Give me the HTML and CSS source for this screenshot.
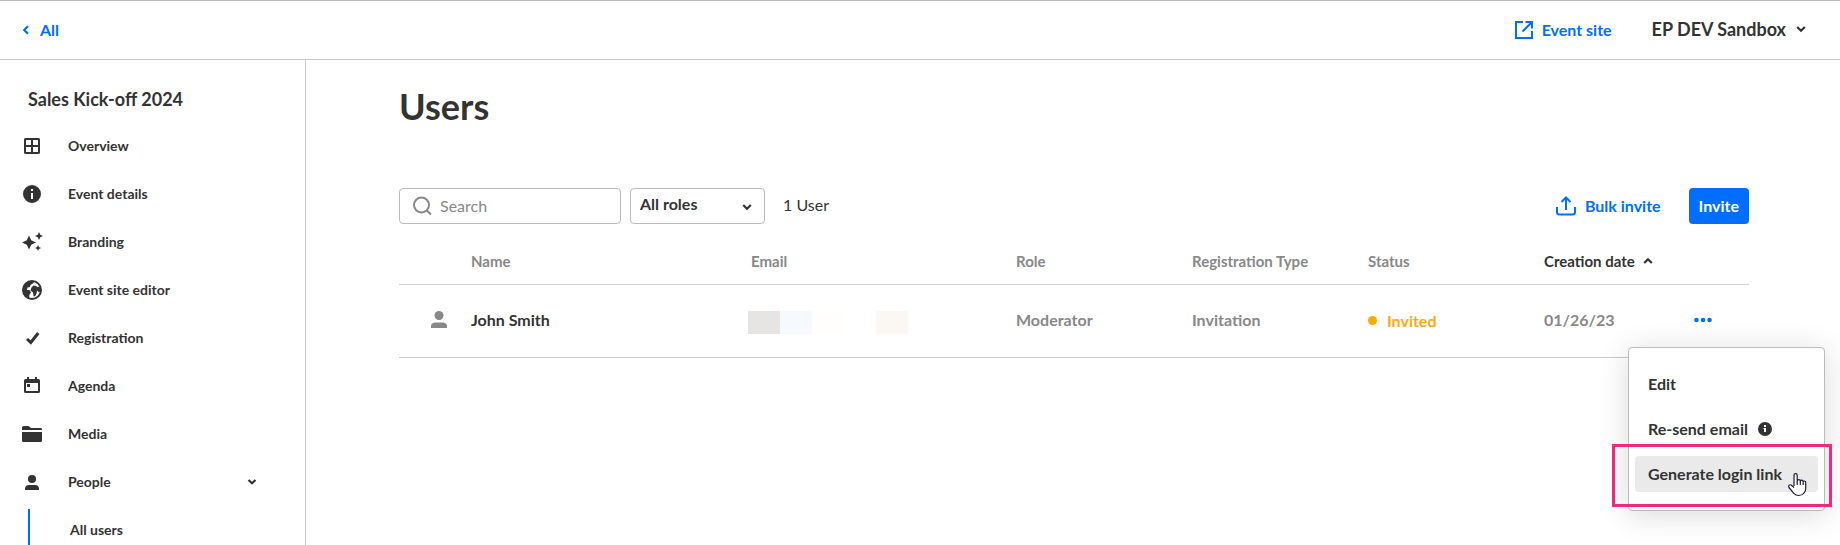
FILE: index.html
```html
<!DOCTYPE html>
<html lang="en">
  <head>
    <meta charset="UTF-8" />
    <meta name="viewport" content="width=device-width, initial-scale=1.0" />
    <title>Users</title>
    <link rel="stylesheet" href="styles.css" />
  </head>
  <body>
    <header class="topbar">
      <a class="backLink" href="#">
        <svg width="8" height="12" viewBox="0 0 8 12"><path d="M6 2.2 2.2 6 6 9.8" fill="none" stroke="currentColor" stroke-width="2.2" /></svg>
        All
      </a>
      <div class="topbarRight">
        <a class="siteLink" href="#">
          <svg width="20" height="20" viewBox="0 0 20 20" fill="none" stroke="currentColor" stroke-width="2"><path d="M9 2H2v16h16v-7M11.500 2H18v6.500M18 2 8.500 11.500" /></svg>
          Event site
        </a>
        <button class="accountBtn">
          EP DEV Sandbox
          <svg class="chevron" width="10" height="8" viewBox="0 0 10 8"><path d="M1.200 2 5 5.700 8.800 2" /></svg>
        </button>
      </div>
    </header>

    <div class="layout">
      <nav class="sidebar">
        <h2 class="eventName">Sales Kick-off 2024</h2>
        <ul class="navList">
          <li>
            <a class="navItem" href="#">
              <svg class="navIcon" viewBox="0 0 24 24"><path d="M5.500 4h13A1.500 1.500 0 0 1 20 5.500v13a1.500 1.500 0 0 1-1.500 1.500h-13A1.500 1.500 0 0 1 4 18.500v-13A1.500 1.500 0 0 1 5.500 4zM6 6v5h5V6zm7 0v5h5V6zm-7 7v5h5v-5zm7 0v5h5v-5z" fill-rule="evenodd" /></svg>
              Overview
            </a>
          </li>
          <li>
            <a class="navItem" href="#">
              <svg class="navIcon" viewBox="0 0 24 24"><path d="M12 3a9 9 0 1 0 0 18 9 9 0 0 0 0-18zm-1 4h2v2h-2zm0 4h2v6h-2z" fill-rule="evenodd" /></svg>
              Event details
            </a>
          </li>
          <li>
            <a class="navItem" href="#">
              <svg class="navIcon" viewBox="0 0 24 24"><path d="M9 5.500 11.200 10.300 16 12.500 11.200 14.700 9 19.500 6.800 14.700 2 12.500 6.800 10.300zM19 2l1.250 2.750L23 6l-2.750 1.250L19 10l-1.250-2.750L15 6l2.750-1.250zM18 15l.9 2.100L21 18l-2.100.9L18 21l-.9-2.100L15 18l2.100-.9z" /></svg>
              Branding
            </a>
          </li>
          <li>
            <a class="navItem" href="#">
              <svg class="navIcon" viewBox="0 0 24 24"><circle cx="12" cy="12" r="9" fill="none" stroke="#333" stroke-width="2" /><path d="M3 9C5 4 9 2.500 14 3L13.500 5 10.500 7 10 9 7.500 9.500 7 12H9.500L11 14.500 9.500 16.500 9 20.500C5 19.500 2 14 3 9zM11.500 9.500 13.500 7.500 16 8 17.500 9 19.500 8.500 21 12 19 14.500 17 12.500 16.500 15.500 15 18.500 13.500 18 13 14.500 10.500 12.500z" /></svg>
              Event site editor
            </a>
          </li>
          <li>
            <a class="navItem" href="#">
              <svg class="navIcon" viewBox="0 0 24 24"><path d="M7 13 10.800 16.500 18.300 7" fill="none" stroke="#333" stroke-width="3" /></svg>
              Registration
            </a>
          </li>
          <li>
            <a class="navItem" href="#">
              <svg class="navIcon" viewBox="0 0 24 24"><path d="M7 3h2v2h6V3h2v2h1.500A1.500 1.500 0 0 1 20 6.500v11a1.500 1.500 0 0 1-1.500 1.500h-13A1.500 1.500 0 0 1 4 17.500v-11A1.500 1.500 0 0 1 5.500 5H7zM6 9v8h12V9zm1 1h3v3H7z" fill-rule="evenodd" /></svg>
              Agenda
            </a>
          </li>
          <li>
            <a class="navItem" href="#">
              <svg class="navIcon" viewBox="0 0 24 24"><path d="M2 8V5.500A1.500 1.500 0 0 1 3.500 4H8.500L11 6h9.500A1.500 1.500 0 0 1 22 8zM2 10h20v8.500a1.500 1.500 0 0 1-1.500 1.500h-17A1.500 1.500 0 0 1 2 18.500z" /></svg>
              Media
            </a>
          </li>
          <li>
            <a class="navItem" href="#">
              <svg class="navIcon" viewBox="0 0 24 24"><circle cx="12" cy="9" r="4" /><path d="M5 20v-1.500C5 16 7 15 9 15h6c2 0 4 1 4 3.500V20z" /></svg>
              People
              <svg class="chevron navChevron" width="10" height="8" viewBox="0 0 10 8"><path d="M1.500 2 5 5.300 8.500 2" /></svg>
            </a>
            <ul class="subList">
              <li><a class="subItem" href="#">All users</a></li>
            </ul>
          </li>
        </ul>
      </nav>

      <main class="content">
        <h1 class="pageTitle">Users</h1>

        <div class="toolbar">
          <label class="searchBox">
            <svg width="20" height="20" viewBox="0 0 20 20" fill="none" stroke="#888" stroke-width="2"><circle cx="9.500" cy="9" r="7.500" /><path d="m14.700 14.300 4.200 4.200" /></svg>
            <input type="search" placeholder="Search" aria-label="Search" />
          </label>
          <div class="selectBox">
            <select aria-label="Role">
              <option>All roles</option>
            </select>
            <svg class="chevron" width="10" height="8" viewBox="0 0 10 8"><path d="M1.200 2 5 5.700 8.800 2" /></svg>
          </div>
          <span class="userCount">1 User</span>
          <button class="bulkBtn">
            <svg width="22" height="20" viewBox="0 0 22 20" fill="none" stroke="currentColor" stroke-width="2"><path d="M2 11v5a2.500 2.500 0 0 0 2.500 2.500h13A2.500 2.500 0 0 0 20 16v-5M11 14V2M6.500 6 11 1.500 15.500 6" /></svg>
            Bulk invite
          </button>
          <button class="inviteBtn">Invite</button>
        </div>

        <table class="usersTable">
          <colgroup>
            <col class="colAvatar" />
            <col class="colName" />
            <col class="colEmail" />
            <col class="colInfo" />
            <col class="colInfo" />
            <col class="colInfo" />
            <col class="colDate" />
            <col class="colActions" />
          </colgroup>
          <thead>
            <tr>
              <th></th>
              <th>Name</th>
              <th>Email</th>
              <th>Role</th>
              <th>Registration Type</th>
              <th>Status</th>
              <th>
                <button class="sortBtn">
                  Creation date
                  <svg class="chevron" width="10" height="8" viewBox="0 0 10 8"><path d="M1.200 6 5 2.300 8.800 6" /></svg>
                </button>
              </th>
              <th></th>
            </tr>
          </thead>
          <tbody>
            <tr>
              <td class="avatarCell">
                <svg width="24" height="24" viewBox="0 0 24 24" fill="#888"><circle cx="12" cy="7.500" r="4.500" /><path d="M4 20v-1.500C4 15.500 6 14.500 8.500 14.500h7c2.500 0 4.500 1 4.500 4V20z" /></svg>
              </td>
              <td class="userName">John Smith</td>
              <td>
                <div class="maskedEmail">
                  <span class="block blockGrey"></span>
                  <span class="block blockBlue"></span>
                  <span class="block blockIvory"></span>
                  <span class="block"></span>
                  <span class="block blockPeach"></span>
                </div>
              </td>
              <td>Moderator</td>
              <td>Invitation</td>
              <td><span class="status">Invited</span></td>
              <td>01/26/23</td>
              <td class="actionsCell">
                <button class="moreBtn" aria-label="More actions">
                  <svg width="18" height="6" viewBox="0 0 18 6" fill="currentColor"><circle cx="2.500" cy="3" r="2.300" /><circle cx="9" cy="3" r="2.300" /><circle cx="15.500" cy="3" r="2.300" /></svg>
                </button>
                <div class="menu">
                  <button class="menuItem">Edit</button>
                  <button class="menuItem">
                    Re-send email
                    <svg width="14" height="14" viewBox="0 0 14 14"><path d="M7 0a7 7 0 1 0 0 14A7 7 0 0 0 7 0zM6 3h2v2H6zM5.500 6H8v4H6V7h-.500z" fill="currentColor" fill-rule="evenodd" /></svg>
                  </button>
                  <button class="menuItem active">Generate login link</button>
                  <div class="highlight"></div>
                  <svg class="cursor" width="20" height="25" viewBox="0 0 20 25"><path d="M7 14V3.200a1.600 1.600 0 0 1 3.200 0V9q.3-1.300 1.600-1.300T13.300 9q.2-.8 1.400-.8t1.500 1.300q.2-.5 1.100-.5 1.400 0 1.400 1.600v5.900q0 2.800-1.700 4.500Q15.200 23.500 12 23.500t-5.200-2.200L2 15.500q-.9-1.500.1-2.400 1-.8 2.400.2L7 15.600M10.200 9v4M13.300 9v4M16.200 9.500V13" fill="#fff" stroke="#1c1c30" stroke-width="1.200" stroke-linejoin="round" /></svg>
                </div>
              </td>
            </tr>
          </tbody>
        </table>
      </main>
    </div>
  </body>
</html>
```
FILE: styles.css
```css
* {
  box-sizing: border-box;
}

body {
  margin: 0;
  height: 100vh;
  overflow: hidden;
  display: flex;
  flex-direction: column;
  background-color: #fff;
  color: #333;
  font-family: Lato, "Open Sans", sans-serif;
  font-size: 16px;
  line-height: 20px;
}

a {
  color: inherit;
  text-decoration: none;
}

button,
input,
select {
  font: inherit;
  color: inherit;
}

button {
  padding: 0;
  border: none;
  background: none;
  cursor: pointer;
}

ul {
  margin: 0;
  padding: 0;
  list-style: none;
}

svg {
  flex: none;
}

.chevron {
  fill: none;
  stroke: #333;
  stroke-width: 2.2;
}

.topbar {
  flex: none;
  display: flex;
  justify-content: space-between;
  align-items: center;
  height: 60px;
  padding: 0 34px 0 22px;
  border-top: 1px solid #bbb;
  border-bottom: 1px solid #c8c8c8;
}

.backLink,
.siteLink,
.bulkBtn {
  display: flex;
  align-items: center;
  gap: 10px;
  color: #006eff;
  font-weight: 700;
}

.topbarRight {
  display: flex;
  align-items: center;
  gap: 40px;
}

.siteLink,
.bulkBtn {
  gap: 8px;
}

.accountBtn {
  display: flex;
  align-items: center;
  gap: 10px;
  padding-bottom: 2px;
  font-size: 18px;
  font-weight: 700;
}

.layout {
  flex: 1;
  min-height: 0;
  display: flex;
}

.sidebar {
  flex: none;
  width: 306px;
  padding-top: 29px;
  border-right: 1px solid #c8c8c8;
}

.eventName {
  margin: 0 28px 13px;
  font-size: 18px;
  line-height: 20px;
  font-weight: 700;
}

.navItem {
  display: flex;
  align-items: center;
  height: 48px;
  padding: 0 48px 0 20px;
  font-size: 14px;
  font-weight: 700;
}

.navIcon {
  width: 24px;
  height: 24px;
  margin-right: 24px;
  fill: #333;
}

.navChevron {
  margin-left: auto;
}

.subList {
  margin: 3px 0 0 28px;
  border-left: 2px solid #006eff;
}

.subItem {
  display: block;
  padding: 11px 40px;
  font-size: 14px;
  font-weight: 700;
}

.content {
  flex: 1;
  min-width: 0;
  padding: 24px 91px 0 93px;
}

.pageTitle {
  margin: 0 0 60px;
  font-size: 36px;
  line-height: 44px;
  font-weight: 700;
}

.toolbar {
  display: flex;
  align-items: center;
  height: 36px;
}

.searchBox {
  display: flex;
  align-items: center;
  gap: 8px;
  width: 222px;
  height: 36px;
  padding: 0 12px;
  border: 1px solid #bbb;
  border-radius: 4px;
}

.searchBox input {
  width: 100%;
  min-width: 0;
  padding: 0;
  border: none;
  outline: none;
  background: none;
}

.searchBox input::placeholder {
  color: #888;
}

.selectBox {
  position: relative;
  width: 135px;
  height: 36px;
  margin-left: 9px;
}

.selectBox select {
  width: 100%;
  height: 100%;
  padding: 0 30px 4px 9px;
  border: 1px solid #bbb;
  border-radius: 4px;
  background: none;
  appearance: none;
  font-weight: 700;
}

.selectBox .chevron {
  position: absolute;
  right: 13px;
  top: 15px;
  pointer-events: none;
}

.userCount {
  margin-left: 18px;
  padding-bottom: 2px;
}

.bulkBtn {
  margin-left: auto;
}

.inviteBtn {
  height: 36px;
  margin-left: 28px;
  padding: 0 10px;
  border-radius: 4px;
  background-color: #006eff;
  color: #fff;
  font-weight: 700;
}

.usersTable {
  width: 100%;
  margin-top: 15px;
  table-layout: fixed;
  border-collapse: collapse;
}

.colAvatar {
  width: 72px;
}

.colEmail {
  width: 265px;
}

.colInfo {
  width: 176px;
}

.colDate {
  width: 150px;
}

.colActions {
  width: 55px;
}

.usersTable th {
  height: 45px;
  padding: 0;
  border-bottom: 1px solid #d4d4d4;
  color: #888;
  font-size: 15px;
  font-weight: 700;
  text-align: left;
}

.usersTable td {
  height: 73px;
  padding: 0 0 2px;
  border-bottom: 1px solid #c8c8c8;
  color: #888;
  font-weight: 700;
}

.sortBtn {
  display: flex;
  align-items: center;
  gap: 8px;
  color: #333;
}

.usersTable .avatarCell {
  padding-left: 28px;
}

.avatarCell svg {
  display: block;
}

.usersTable .userName {
  color: #333;
}

.maskedEmail {
  display: flex;
  margin: 5px 0 0 -3px;
}

.block {
  width: 32px;
  height: 23px;
}

.blockGrey {
  background-color: #e6e5e4;
}

.blockBlue {
  background-color: #f6faff;
}

.blockIvory {
  background-color: #fffefc;
}

.blockPeach {
  background-color: #fbf7f3;
}

.status {
  display: flex;
  align-items: center;
  gap: 10px;
  padding-top: 2px;
  color: #ffa812;
}

.status::before {
  content: "";
  width: 9px;
  height: 9px;
  border-radius: 50%;
  background-color: #ffa800;
}

.actionsCell {
  position: relative;
}

.moreBtn {
  display: flex;
  color: #006eff;
}

.menu {
  position: absolute;
  top: 62px;
  right: -76px;
  width: 197px;
  padding: 18px 6px;
  display: flex;
  flex-direction: column;
  gap: 9px;
  border: 1px solid #bbb;
  border-radius: 4px;
  background-color: #fff;
  color: #333;
  box-shadow: 0 4px 30px rgba(0, 0, 0, 0.15);
}

.menuItem {
  display: flex;
  align-items: center;
  gap: 10px;
  height: 36px;
  padding: 0 13px;
  border-radius: 4px;
  font-weight: 700;
}

.menuItem.active {
  background-color: #eaeaea;
}

.highlight {
  position: absolute;
  left: -17px;
  right: -8px;
  bottom: 3px;
  height: 63px;
  border: 3px solid #ee2a7b;
  pointer-events: none;
}

.cursor {
  position: absolute;
  right: 17px;
  bottom: 13px;
}
```
